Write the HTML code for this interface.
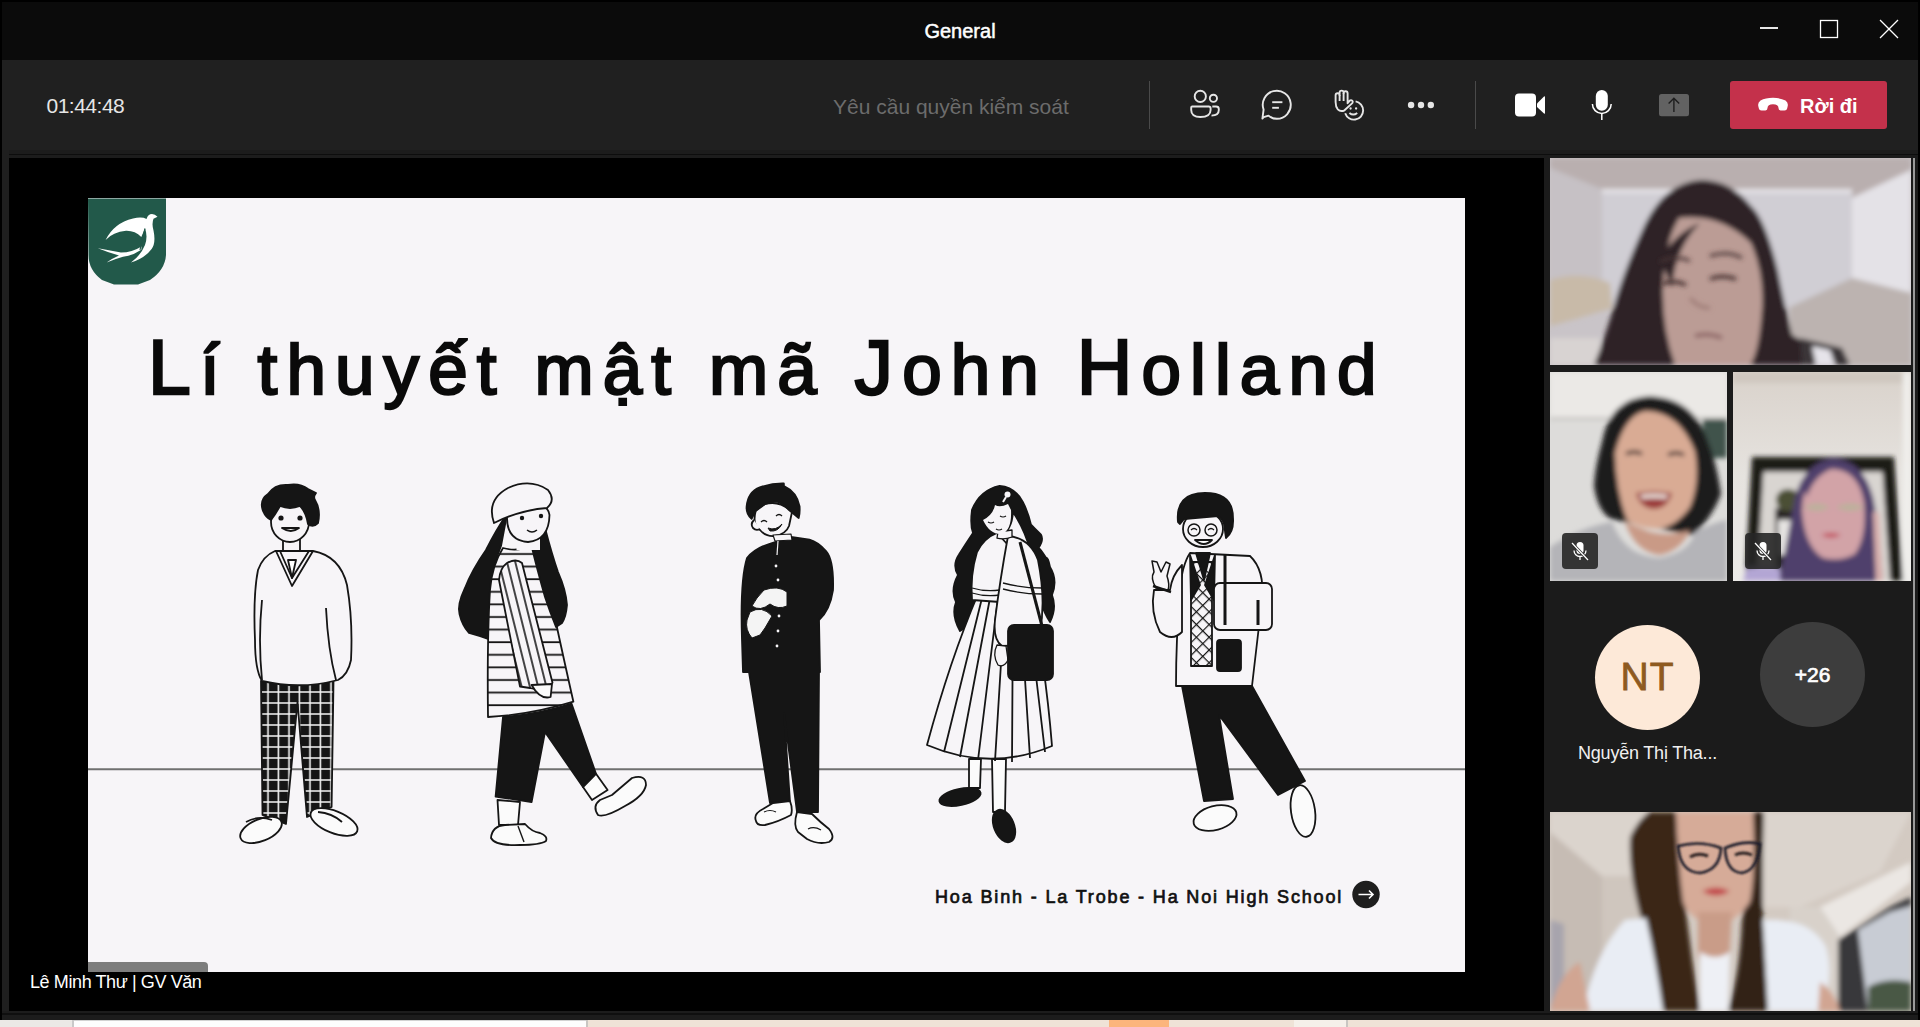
<!DOCTYPE html>
<html><head><meta charset="utf-8">
<style>
*{margin:0;padding:0;box-sizing:border-box}
html,body{width:1920px;height:1027px;overflow:hidden;background:#000;font-family:"Liberation Sans",sans-serif}
.abs{position:absolute}
#hdr{left:0;top:0;width:1920px;height:60px;background:#0b0b0b}
#title{left:0;top:19px;width:1920px;text-align:center;color:#fff;font-size:20px;line-height:24px;-webkit-text-stroke:0.5px #fff}
#tb{left:2px;top:60px;width:1916px;height:90px;background:#202020}
#tbsh{left:2px;top:150px;width:1916px;height:8px;background:#1c1c1c;border-top:4px solid #1c1c1c}
#tbline{left:2px;top:154px;width:1916px;height:1px;background:#0d0d0d}
#leftb{left:2px;top:150px;width:7px;height:870px;background:#1f1f1f}
#vid{left:9px;top:158px;width:1535px;height:853px;background:#000}
#panel{left:1544px;top:155px;width:375px;height:865px;background:#1b1b1b}
#rline{left:1913px;top:158px;width:2px;height:853px;background:#9a9a9a}
#bottom{left:2px;top:1011px;width:1917px;height:9px;background:#1c1c1c}
#bline{left:2px;top:1013px;width:1917px;height:2px;background:#0f0f0f}
#strip{left:0;top:1020px;width:1920px;height:7px;background:#efe3d7}
#slide{left:88px;top:198px;width:1377px;height:774px;background:#f7f5f8;overflow:hidden}
.tile{position:absolute;overflow:hidden}
.t{position:absolute;white-space:nowrap}
</style></head><body>
<div id="hdr" class="abs"></div>
<div id="title" class="abs">General</div>
<!-- window controls -->
<svg class="abs" style="left:1740px;top:10px" width="170" height="40">
  <line x1="20" y1="18" x2="38" y2="18" stroke="#fff" stroke-width="1.8"/>
  <rect x="80.5" y="10.5" width="17" height="17" fill="none" stroke="#fff" stroke-width="1.3"/>
  <line x1="140" y1="10" x2="158" y2="28" stroke="#fff" stroke-width="1.3"/>
  <line x1="158" y1="10" x2="140" y2="28" stroke="#fff" stroke-width="1.3"/>
</svg>
<div id="tb" class="abs"></div>
<div id="tbsh" class="abs"></div>
<div id="tbline" class="abs"></div>
<div id="leftb" class="abs"></div>
<div id="panel" class="abs"></div>
<div id="vid" class="abs"></div>
<div id="rline" class="abs"></div>
<div id="bottom" class="abs"></div>
<div id="bline" class="abs"></div>
<div id="strip" class="abs"></div>
<div class="abs" style="left:0;top:1020px;width:72px;height:7px;background:#ebe9e6"></div>
<div class="abs" style="left:72px;top:1020px;width:2px;height:7px;background:#c9c9c9"></div>
<div class="abs" style="left:74px;top:1020px;width:512px;height:7px;background:#fdfdfd;border-top:1px solid #d2d2d2"></div>
<div class="abs" style="left:586px;top:1020px;width:2px;height:7px;background:#c9c6c2"></div>
<div class="abs" style="left:1109px;top:1020px;width:60px;height:7px;background:#fcb57c"></div>
<div class="abs" style="left:1294px;top:1020px;width:52px;height:7px;background:#f5f0ea"></div>
<div class="abs" style="left:1346px;top:1020px;width:2px;height:7px;background:#c9c6c2"></div>
<div class="abs" style="left:0;top:0;width:1920px;height:2px;background:#000"></div><div class="abs" style="left:0;top:0;width:2px;height:1020px;background:#000"></div><div class="abs" style="left:1918px;top:0;width:2px;height:1020px;background:#000"></div>

<!-- toolbar -->
<div class="t" style="left:46.5px;top:93px;font-size:21px;line-height:26px;color:#e6e6e6;letter-spacing:-0.5px">01:44:48</div>
<div class="t" style="left:833px;top:94px;font-size:21px;line-height:26px;color:#6c6c6c">Yêu cầu quyền kiểm soát</div>
<div class="abs" style="left:1149px;top:81px;width:1px;height:48px;background:#4a4a4a"></div>
<div class="abs" style="left:1475px;top:81px;width:1px;height:48px;background:#4a4a4a"></div>
<svg class="abs" style="left:1180px;top:80px" width="260" height="50" fill="none" stroke="#e6e6e6" stroke-width="1.9">
  <!-- people -->
  <circle cx="20.3" cy="16.4" r="5.6"/>
  <circle cx="33.4" cy="18.3" r="3.6"/>
  <path d="M12.2 26.5 H28.7 Q30.6 26.5 30.6 28.4 V30 Q30.6 37 20.4 37 Q11.2 37 11.2 30 V27.5 Q11.2 26.5 12.2 26.5 Z"/>
  <path d="M32.3 26.5 H36 Q38.8 26.5 38.8 29 V30 Q38.8 35.5 31.5 35.6"/>
  <!-- chat -->
  <path d="M83.7 37.2 L88.5 35.6 Q92 38.8 96.9 38.8 A14 14 0 1 0 83.6 29.6 L82.4 38.6 Z" stroke-linejoin="round"/>
  <line x1="92.2" y1="22.2" x2="102.4" y2="22.2"/>
  <line x1="92.2" y1="27.8" x2="98.9" y2="27.8"/>
  <!-- hand + smiley -->
  <path d="M164.5 30.3Q160.5 32.2 157.8 29.3Q155.6 26.8 155.6 22V15.2Q155.6 13.2 157.6 13.2Q159.6 13.2 159.6 15.2V12.6Q159.6 10.6 161.6 10.6Q163.6 10.6 163.6 12.6V13.2Q163.6 11.2 165.6 11.2Q167.6 11.2 167.6 13.2V23.2L169.6 20.8Q171 19.5 172.3 20.7Q173.3 21.8 172.3 23.1Z" stroke-linejoin="round"/>
  <line x1="159.6" y1="15" x2="159.6" y2="21"/>
  <line x1="163.6" y1="13" x2="163.6" y2="21"/>
  <path d="M175.6 21.4A9.2 9.2 0 1 1 165.2 33.3"/>
  <circle cx="170.6" cy="28.5" r="1.15" fill="#e6e6e6" stroke="none"/>
  <circle cx="176.1" cy="28.5" r="1.15" fill="#e6e6e6" stroke="none"/>
  <path d="M169.4 33Q173.3 36.2 177.2 33"/>
  <!-- dots -->
  <circle cx="231.1" cy="25" r="3.2" fill="#e6e6e6" stroke="none"/>
  <circle cx="241" cy="25" r="3.2" fill="#e6e6e6" stroke="none"/>
  <circle cx="250.8" cy="25" r="3.2" fill="#e6e6e6" stroke="none"/>
</svg>
<svg class="abs" style="left:1500px;top:80px" width="200" height="50">
  <rect x="15" y="13.5" width="21" height="23" rx="4" fill="#fff"/>
  <path d="M37 23.5 L44 16.5 Q45 15.8 45 17 V33 Q45 34.2 44 33.5 L37 27 Z" fill="#fff"/>
  <rect x="95.8" y="9.9" width="12" height="20.8" rx="6" fill="#fff"/>
  <path d="M92.4 24 A9.4 9.4 0 0 0 111.2 24" fill="none" stroke="#fff" stroke-width="1.5"/>
  <line x1="101.8" y1="33.4" x2="101.8" y2="40" stroke="#fff" stroke-width="1.5"/>
  <rect x="159" y="14" width="30" height="22.3" rx="2.5" fill="#626262"/>
  <path d="M173.9 32 V18.5 M168.6 23.6 L173.9 18.3 L179.2 23.6" fill="none" stroke="#1e1e1e" stroke-width="1.4"/>
</svg>
<div class="abs" style="left:1730px;top:81px;width:157px;height:48px;background:#c4314b;border-radius:3px"></div>
<svg class="abs" style="left:1756px;top:96px" width="34" height="17">
  <path d="M2.5 11 Q1.2 7 4.5 4.6 Q9.5 1.8 17 1.8 Q24.5 1.8 29.5 4.6 Q32.8 7 31.5 11 Q31 14.5 28.5 14.6 L24.5 14.5 Q22.5 14.3 22.5 12 Q22.5 8.5 17 8.3 Q11.5 8.5 11.5 12 Q11.5 14.3 9.5 14.5 L5.5 14.6 Q3 14.5 2.5 11 Z" fill="#fff"/>
</svg>
<div class="t" style="left:1800px;top:94px;font-size:20px;line-height:24px;color:#fff;font-weight:bold">Rời đi</div>

<div id="slide" class="abs"></div>
<svg class="abs" style="left:88px;top:198px" width="1377" height="774" viewBox="88 198 1377 774">
<defs>
<pattern id="plaid" width="10.5" height="11" patternUnits="userSpaceOnUse" x="262" y="684"><rect width="10.5" height="11" fill="#151515"/><path d="M6 0V11M0 8H10.5" stroke="#f4f4f4" stroke-width="1.6"/></pattern>
<pattern id="hstripe" width="20" height="12.6" patternUnits="userSpaceOnUse" y="548"><rect width="20" height="12.6" fill="#f7f5f8"/><path d="M0 6H20" stroke="#151515" stroke-width="1.8"/></pattern>
<pattern id="vstripe" width="8" height="20" patternUnits="userSpaceOnUse" patternTransform="rotate(-14)"><rect width="8" height="20" fill="#f7f5f8"/><path d="M4 0V20" stroke="#151515" stroke-width="1.6"/></pattern>
<pattern id="argyle" width="9" height="9" patternUnits="userSpaceOnUse" patternTransform="rotate(45)"><rect width="9" height="9" fill="#f7f5f8"/><path d="M0 0V9M0 0H9" stroke="#151515" stroke-width="2.4"/></pattern>
</defs>
<!-- logo -->
<path d="M88 198.5H166V255Q165 270 150 280L138 284.5H114L102 280Q88.5 270 88.5 255Z" fill="#22594a"/>
<path d="M105.6 240Q114 223 133 218.5Q142 216.5 146.5 219Q148 214 152 214Q155 214 157.5 216.8L153.5 218.8Q151.5 224 153.6 231Q156 243 151.6 249Q145 258 131 262.6Q141 255 145 245Q148 236 145 228.5Q143 233 141.3 237Q135 230.5 126 230.8Q113 232 105.6 240Z" fill="#fff"/>
<path d="M97.9 248.3Q110 250.5 121 252.5Q132 252.5 141.5 246.5L141.3 249.8Q133 255.5 123 256.8Q115 259 106.6 262.6Q113 258 119 255.5Q108 252.5 97.9 248.3Z" fill="#fff"/>
<path d="M145 228.5Q142 240 140 250" stroke="#22594a" stroke-width="1.2" fill="none"/>
<!-- floor -->
<line x1="88" y1="769.2" x2="1465" y2="769.2" stroke="#707070" stroke-width="1.9"/>
<g stroke="#151515" stroke-width="1.8" stroke-linejoin="round">
<!-- boy 1 -->
<path d="M261 681L333.5 681L331.6 807L307 817L297.5 702L286 824L262.5 815Z" fill="url(#plaid)"/>
<ellipse cx="261" cy="830" rx="22" ry="11" transform="rotate(-22 261 830)" fill="#fbfbfb"/>
<ellipse cx="334" cy="822" rx="25" ry="11" transform="rotate(22 334 822)" fill="#fbfbfb"/>
<path d="M246 822Q258 815 272 820M318 812Q332 813 342 822" fill="none"/>
<rect x="283" y="536" width="17" height="16" fill="#f7f5f8"/>
<path d="M275 551L313 551Q340 556 347 585Q353 620 351 660Q348 675 338 680Q300 690 262 681Q255 670 255 640Q253 595 258 570Q263 556 275 551Z" fill="#f7f5f8"/>
<path d="M276 551L292 586L313 551M280 551L292 578L309 551" fill="none"/>
<path d="M288 560L292 578L296 560Z" fill="#fff"/>
<path d="M326 608Q328 650 336 680M262 600Q258 640 262 680" fill="none"/>
<ellipse cx="290" cy="522" rx="19" ry="20" fill="#f7f5f8"/>
<path d="M263 511Q259 500 268 494Q275 484 288 485Q300 483 308 489L316 493Q313 497 315 500Q321 510 318 523Q313 528 308 524Q306 512 300 506Q290 510 280 506Q275 515 271 520Q266 518 263 511Z" fill="#151515"/>
<circle cx="281" cy="518" r="2.6" fill="#151515" stroke="none"/><circle cx="300" cy="518" r="2.6" fill="#151515" stroke="none"/>
<path d="M282 528Q291 534 299 528Z" fill="#fff"/>
<!-- girl 2 -->
<path d="M507 514Q496 530 486 550Q472 570 465 588Q457 605 459.5 614Q462 625 469 633Q480 636 488 639Q490 610 492 584Q495 560 501 546Z" fill="#151515"/>
<path d="M503 717Q540 714 571.5 703.6L596 773.8L583 787L545 732L531.6 802L495.6 796.6Z" fill="#151515"/>
<path d="M497.5 800L520 802L518 825L499 825Z" fill="#fbfbfb"/>
<path d="M491 838Q492 826 505 825L525 824Q532 832 540 833Q548 836 546 841Q540 845 520 845Q495 846 491 838Z" fill="#fbfbfb"/>
<path d="M518 826L524 842" fill="none" stroke-width="1.4"/>
<path d="M583 787L596 773.8L607.6 790L592 800Z" fill="#fbfbfb"/>
<path d="M598 815Q592 806 600 800L612 795L632 778Q646 774 646 785Q644 796 625 806Q605 818 598 815Z" fill="#fbfbfb"/>
<path d="M503 548Q517 552 531.6 546L543 561Q555 620 573.4 701.7Q530 715 488 717Q487 640 490 590Q492 565 503 548Z" fill="url(#hstripe)"/>
<path d="M531.6 546Q540 540 545 528Q552 555 558 572Q566 590 567 605Q566 617 562 623L556 627Q550 612 545 597Q536 565 531.6 546Z" fill="#151515"/>
<path d="M507 563Q516 558 522 563L552.5 682.7Q545 692 530 688L520 686.5L499 580Q500 568 507 563Z" fill="url(#vstripe)"/>
<path d="M531.6 685Q540 700 550.6 697L552 684Z" fill="#fbfbfb"/>
<path d="M516.5 528L540 528L540 550L516.5 550Z" fill="#f7f5f8" stroke="none"/>
<path d="M507 518Q507 540 528 542Q549 540 549.5 515Q548 506 540 506L515 508Q507 510 507 518Z" fill="#f7f5f8"/>
<path d="M494 523Q486 500 508 488Q530 478 548 490Q556 500 547 508Q520 510 494 523Z" fill="#f7f5f8"/>
<circle cx="522" cy="518" r="2.2" fill="#151515" stroke="none"/><circle cx="541" cy="516" r="2.2" fill="#151515" stroke="none"/>
<path d="M527 530Q532 534 537 530" fill="none" stroke-width="1.4"/>
<!-- boy 3 -->
<path d="M749 672L819 672L818 812L797 812L784 713L790 802L770 803Z" fill="#151515"/>
<path d="M756 821Q753 814 763 809L773 803L790 801Q793 809 791 815Q778 822 765 825Q757 826 756 821Z" fill="#fbfbfb"/><path d="M764 812Q770 809 776 812" fill="none" stroke-width="1.2"/>
<path d="M797 812L812 814Q820 822 829 829Q836 838 829 842Q818 845 807 839L798 832Q793 826 797 812Z" fill="#fbfbfb"/><path d="M808 829Q814 826 821 830" fill="none" stroke-width="1.2"/>
<path d="M772 543Q755 548 747 558Q740 580 742 640L743 672L820 672L819 620Q830 610 833 590Q834 560 826 551Q818 542 809.5 539.6L791 537Z" fill="#151515"/>
<path d="M764 590Q778 585 787 592L787 606Q778 610 770 604Q760 612 752 606Q756 598 764 590Z" fill="#f4f4f4" stroke-width="1"/><path d="M750 612Q762 605 772 616L765 628L760 635L752 638Q745 630 747 620Z" fill="#f4f4f4" stroke-width="1"/>
<path d="M755.7 511Q752 525 760 530Q766 537 775 536Q786 534 789 526L792 512Q780 500 765 504Z" fill="#f7f5f8"/>
<path d="M754 520Q750 524 753 528Q756 531 760 529" fill="#f7f5f8"/>
<path d="M746.6 506.5Q748 492 759.8 487.4Q772 483 783.8 483.3L784 486Q797 492 799.6 506.5Q800 514 798.7 518L788.8 509.8Q782 502 776.4 501.5Q764 502 755.7 510.6L751.6 518.9Q746 514 746.6 506.5Z" fill="#151515"/>
<path d="M761 522Q764 519 767 522M776 516Q779 513 782 516" fill="none" stroke-width="1.3"/>
<path d="M768 528Q776 531 782 524Q778 532 770 531Z" fill="#151515" stroke-width="1"/>
<path d="M773 535L791 534L792 540L775 541Z" fill="#f7f5f8" stroke-width="1.2"/>
<path d="M778 541L777 555" fill="none" stroke="#f7f5f8" stroke-width="1.2"/>
<circle cx="776" cy="566" r="1.4" fill="#f7f5f8" stroke="none"/><circle cx="778" cy="580" r="1.4" fill="#f7f5f8" stroke="none"/><circle cx="779" cy="616" r="1.4" fill="#f7f5f8" stroke="none"/><circle cx="778" cy="631" r="1.4" fill="#f7f5f8" stroke="none"/><circle cx="777" cy="646" r="1.4" fill="#f7f5f8" stroke="none"/>
<!-- girl 4 -->
<path d="M999.6 485.8Q980 490 972 509.8Q970 525 973 533Q965 545 959 554.5Q952 565 958 575Q950 590 956 602Q951 615 960 631L974 622L978 560Q990 545 1000 537Q1012 530 1013 512Q1025 530 1030 550Q1036 580 1040 600Q1045 615 1050 622Q1057 608 1052 595Q1058 580 1050 567Q1048 557 1046 557.8Q1040 548 1038.5 547.8Q1044 540 1041 534.6Q1034 528 1031 524.7Q1028 512 1022.8 502Q1015 487 999.6 485.8Z" fill="#151515"/>
<path d="M969 759L981 759L980 788L969 788Z" fill="#fbfbfb"/>
<ellipse cx="960" cy="797" rx="21" ry="8" transform="rotate(-12 960 797)" fill="#151515"/>
<path d="M992 759L1006 759L1005 812L993 812Z" fill="#fbfbfb"/>
<ellipse cx="1004" cy="826" rx="10" ry="17" transform="rotate(-22 1004 826)" fill="#151515"/>
<path d="M978 594L1030 594Q1045 660 1052 746Q990 772 927 745Q950 660 978 594Z" fill="#f7f5f8"/>
<path d="M982 598L944 752M990 598L960 757M998 598L978 760M1005 598L995 761M1013 598L1012 762M1020 600L1030 758M1027 600L1045 752" fill="none"/>
<path d="M997 533Q984 538 977 552Q970 575 972 600L1000 602L1008 545Z" fill="#f7f5f8"/><path d="M972 588Q985 592 1000 590M972 593Q985 597 1000 595" fill="none" stroke-width="1.3"/>
<path d="M1008 536Q1030 538 1038 560Q1046 600 1040 632Q1030 646 1002 646Q993 640 995 620Q1000 580 1008 536Z" fill="#f7f5f8"/><path d="M1003 583Q1022 588 1042 588M1003 589Q1022 594 1042 594" fill="none" stroke-width="1.3"/><path d="M997 645Q992 655 998 665Q1004 668 1008 660L1006 646Z" fill="#f7f5f8" stroke-width="1.3"/><path d="M998 532L1012 530L1012 537Q1004 540 997 538Z" fill="#f7f5f8" stroke-width="1.3"/>
<rect x="1008" y="625" width="45" height="55" rx="6" fill="#151515"/>
<path d="M1020 542L1042 626" fill="none" stroke-width="3"/>
<path d="M983 520Q990 535 1002 534Q1012 530 1011 510L1008 504Q1000 508 995 505Q993 515 983 520Z" fill="#f7f5f8" stroke="none"/>
<circle cx="1007.5" cy="494.5" r="3" fill="#f7f5f8" stroke="none"/>
<path d="M1003 502L1006 497" stroke="#f7f5f8" stroke-width="2"/>
<path d="M988 522Q991 524 994 522M1000 516Q1003 518 1006 516" fill="none" stroke-width="1.2"/>
<path d="M996 529Q999 531 1002 529" fill="none" stroke-width="1.2"/>
<!-- boy 5 -->
<path d="M1182 686L1252 686L1305 781L1278 795L1219 715L1233 799L1204 801Z" fill="#151515"/>
<ellipse cx="1215" cy="818" rx="22" ry="12" transform="rotate(-15 1215 818)" fill="#fbfbfb"/>
<ellipse cx="1303" cy="811" rx="12" ry="26" transform="rotate(-8 1303 811)" fill="#fbfbfb"/>
<path d="M1190 553L1250 556Q1265 570 1262 600L1252 686L1176 686Q1176 640 1180 590Q1182 565 1190 553Z" fill="#f7f5f8"/>
<path d="M1191 562L1212 562L1212 666L1191 666Z" fill="url(#argyle)"/>
<path d="M1196 553L1210 553L1204 580Z" fill="#151515"/><path d="M1190 555L1200 585L1191 600Z" fill="#151515"/><path d="M1215 555L1205 585L1214 600Z" fill="#151515"/>
<path d="M1182 565Q1172 575 1170 590L1154 590Q1150 612 1160 632Q1172 642 1182 632Z" fill="#f7f5f8"/>
<path d="M1156 588Q1150 578 1154 572L1152 561L1157 562L1161 572L1166 562L1170 564L1167 576Q1170 585 1168 590Z" fill="#f7f5f8" stroke-width="1.5"/><path d="M1153 586L1171 592" fill="none" stroke-width="2.5"/>
<rect x="1214" y="583" width="58" height="47" rx="6" fill="#f7f5f8"/>
<path d="M1225 555L1225 625M1258 600L1258 625" fill="none" stroke-width="3"/>
<rect x="1217" y="640" width="24" height="31" rx="3" fill="#151515"/>
<ellipse cx="1203" cy="529" rx="20" ry="18" fill="#f7f5f8"/>
<path d="M1178 522Q1175 493 1205 493Q1233 493 1233 518Q1234 532 1226 538L1224 524Q1222 518 1218 516L1184 519L1180 524Z" fill="#151515"/>
<circle cx="1194" cy="530" r="6" fill="none" stroke-width="1.5"/><circle cx="1211" cy="530" r="6" fill="none" stroke-width="1.5"/><path d="M1191 530Q1194 527 1197 530M1208 530Q1211 527 1214 530" fill="none" stroke-width="1.2"/>
<path d="M1195 540Q1204 548 1212 540Z" fill="#fff"/>
</g>
<!-- footer -->
<circle cx="1366" cy="894.5" r="13.7" fill="#1e1e1e"/>
<path d="M1358.5 894.5H1373M1369 890.5L1373 894.5L1369 898.5" stroke="#fff" stroke-width="1.6" fill="none"/>
</svg>
<div class="t" id="ttl" style="left:148px;top:322px;font-size:71px;line-height:90px;font-weight:normal;color:#0a0a0a;letter-spacing:9.1px;-webkit-text-stroke:2.4px #0a0a0a"><span style="font-size:77px">L</span>í thuyết mật mã <span style="font-size:77px">J</span>ohn <span style="font-size:77px">H</span>olland</div>
<div class="t" id="ftr" style="left:935px;top:886px;font-size:18px;line-height:22px;font-weight:normal;color:#111;letter-spacing:1.85px;-webkit-text-stroke:0.7px #111">Hoa Binh - La Trobe - Ha Noi High School</div>
<div class="abs" style="left:88px;top:962px;width:120px;height:10px;background:#7d7d7d;border-top-right-radius:4px"></div>
<div class="t" style="left:30px;top:971px;font-size:18px;line-height:22px;color:#fff;letter-spacing:-0.4px">Lê Minh Thư | GV Văn</div>


<!-- participant tiles -->
<svg class="abs" style="left:1550px;top:158px" width="361" height="207" viewBox="0 0 361 207">
<defs><filter id="bl3" x="-20%" y="-20%" width="140%" height="140%"><feGaussianBlur stdDeviation="2.5"/></filter>
<filter id="bl6" x="-20%" y="-20%" width="140%" height="140%"><feGaussianBlur stdDeviation="6"/></filter><filter id="bl1" x="-20%" y="-20%" width="140%" height="140%"><feGaussianBlur stdDeviation="0.8"/></filter></defs>
<rect width="361" height="207" fill="#c9c4c8"/>
<g filter="url(#bl3)">
<path d="M0 0H361V12L302 40H52L0 10Z" fill="#b9afaf"/>
<rect x="52" y="31" width="250" height="118" fill="#d0ced4"/>
<rect x="52" y="31" width="250" height="4" fill="#e6e4e8"/>
<path d="M0 10L52 31V149L0 160Z" fill="#c6c1c5"/>
<path d="M302 40L361 12V135L302 120Z" fill="#e4e2e7"/>
<path d="M302 120L361 135V207H240V149Z" fill="#bcb3b0"/>
<path d="M0 180H50V207H0Z" fill="#d8d3d2"/>
<path d="M0 122Q30 112 60 125L62 150Q30 160 0 168Z" fill="#c8baa8"/>
<path d="M151 22Q115 25 95 66Q75 110 66 141Q55 180 44 207H292Q265 190 242 177Q233 140 228 113Q215 60 201 48Q180 22 151 22Z" fill="#2f2427"/>
<path d="M129 60Q170 55 201 85Q214 115 212 150Q209 195 200 207H125Q112 170 113 130Q114 85 129 60Z" fill="#bb9c95"/>
<path d="M110 101Q125 75 150 65Q125 90 122 130Z" fill="#2f2427"/>
<path d="M145 178Q158 174 172 180" stroke="#8c6464" stroke-width="4" fill="none"/>
<path d="M250 180L292 190L300 207H252Z" fill="#3a3538"/>
<path d="M262 188L280 192L285 207L266 207Z" fill="#e6e4ea"/>
</g>
<g filter="url(#bl3)"><path d="M110 104Q125 96 140 103M160 98Q178 92 192 100" stroke="#4a3434" stroke-width="3" fill="none"/>
<path d="M112 126Q124 121 136 127M160 121Q172 116 186 121" stroke="#3a2828" stroke-width="3.5" fill="none"/>
<path d="M140 140Q148 150 160 150" stroke="#9c7a74" stroke-width="3" fill="none"/></g>
</svg>

<svg class="abs" style="left:1550px;top:372px" width="177" height="209" viewBox="0 0 177 209">
<rect width="177" height="209" fill="#dddcda"/>
<g filter="url(#bl3)">
<rect width="177" height="47" fill="#ebe9e6"/>
<rect y="45" width="177" height="3" fill="#c8c6c3"/>
<rect x="153" y="47" width="24" height="39" fill="#40534b"/>
<path d="M100 24Q60 26 52 70Q45 95 44 114Q48 140 61 147L142 163Q160 150 171 122Q165 80 150 52Q135 26 100 24Z" fill="#1b1a1b"/>
<path d="M96 39Q130 40 145 80Q150 110 140 135Q125 156 106 157Q85 155 77 148Q66 120 65 81Q75 42 96 39Z" fill="#d9ab94"/>
<path d="M0 175Q30 155 62 150Q75 185 110 186Q140 180 145 160Q165 150 177 148V209H0Z" fill="#b4b4b8"/>
<path d="M75 150Q85 180 110 183Q132 178 140 158Q120 165 100 160Z" fill="#c99a86"/>
<path d="M86 121Q104 118 122 121Q118 136 104 137Q90 136 86 121Z" fill="#9b3b3a"/>
<path d="M90 123Q104 121 118 123L116 127Q104 125 92 127Z" fill="#f0e6e0"/>
<path d="M76 82Q84 78 92 82M118 83Q126 79 134 83" stroke="#3a2a2a" stroke-width="3.5" fill="none"/>
</g>
</svg>

<svg class="abs" style="left:1733px;top:372px" width="178" height="209" viewBox="0 0 178 209">
<defs><linearGradient id="t3bg" x1="0" y1="0" x2="0" y2="1"><stop offset="0" stop-color="#d9d2cb"/><stop offset="0.5" stop-color="#e6e3df"/><stop offset="1" stop-color="#ecebe8"/></linearGradient></defs>
<rect width="178" height="209" fill="url(#t3bg)"/>
<g filter="url(#bl3)">
<rect width="178" height="11" fill="#cfc7bf"/>
<rect x="170" width="8" height="209" fill="#f0efec"/>
<path d="M19 85H161L170 209H12Z" fill="#1f1a19"/>
<path d="M30.5 99.7H149.5L157 209H24Z" fill="#d9d5d1"/>
<rect x="42" y="136" width="21" height="73" fill="#2c2826"/>
<rect x="45" y="148" width="18" height="35" fill="#e6e4e2"/>
<ellipse cx="55" cy="128" rx="12" ry="11" fill="#4c5034"/>
<path d="M100 87Q72 90 62 125Q55 165 46 209H150Q148 165 140 125Q130 88 100 87Z" fill="#4f3f6c"/>
<path d="M98 97Q125 97 131 130Q134 165 122 182Q108 190 90 186Q72 175 69 140Q69 102 98 97Z" fill="#d2a3a7"/>
<path d="M98 97Q80 105 74 125L70 110Q80 92 98 97Z" fill="#4f3f6c"/>
<path d="M71 135Q84 128 97 135Q84 143 71 135ZM103 135Q118 128 131 135Q118 143 103 135Z" fill="#aebb92" opacity="0.6"/>
<path d="M88 163Q98 159 108 163Q98 168 88 163Z" fill="#c24a5a"/>
<path d="M10 209L14 196Q30 192 47 196V209Z" fill="#b3a6d4"/>
<path d="M140 140L146 140L150 209H143Z" fill="#d9b0ad"/>
</g>
</svg>

<svg class="abs" style="left:1550px;top:812px" width="361" height="199" viewBox="0 0 361 199">
<rect width="361" height="199" fill="#d3cac2"/>
<g filter="url(#bl3)">
<path d="M0 0H361V0L330 60L250 95L60 95L0 30Z" fill="#dbd4cd"/>
<path d="M0 20L52 64L52 199H0Z" fill="#c6bcb4"/>
<path d="M52 64H100V199H52Z" fill="#cfc6be"/>
<path d="M270 95L361 50V70L290 125Z" fill="#ebe7e3"/>
<path d="M270 95L290 125L290 199H240V95Z" fill="#d8d1ca"/>
<path d="M0 108L14 112L14 190L0 199Z" fill="#a7a4ad"/>
<path d="M288 128L340 95L361 85V199H288Z" fill="#38373a"/>
<path d="M308 118L340 100L361 94V199H318Z" fill="#c8ccd4"/>
<path d="M318 175Q335 165 361 170V199H318Z" fill="#4a5845"/>
<path d="M99 0H130Q133 60 136 100Q142 150 150 199H113Q98 150 92 110Q78 60 80 25Q88 8 99 0Z" fill="#3a2519"/>
<path d="M200 0H214Q212 60 213 110Q218 160 218 199H178Q190 160 192 110Q200 60 200 0Z" fill="#302118"/>
<path d="M126 0H203Q206 60 200 90Q185 112 166 112Q140 110 133 90Q128 50 126 0Z" fill="#d6ab98"/>
<path d="M148 100L182 100L179 150L148 147Z" fill="#c99c88"/>
<path d="M152 79Q166 72 180 79Q166 88 152 79Z" fill="#c24448"/>
<path d="M33 199Q45 140 75 108L96 106Q106 150 113 199Z" fill="#e9edf4"/>
<path d="M150 140Q165 150 180 140L178 199H150Z" fill="#eef0f5"/>
<path d="M213 108Q260 105 276 135Q285 165 270 199H218Z" fill="#e9edf4"/>
<path d="M0 199Q10 160 30 150L40 199Z" fill="#d1a592"/>
<path d="M270 170Q285 180 290 199H268Z" fill="#d1a592"/>
</g>
<g filter="url(#bl1)"><path d="M140 45Q148 40 158 44M185 43Q193 39 202 43" stroke="#2a2020" stroke-width="3" fill="none"/><path d="M128 34Q150 28 171 36Q170 58 150 61Q130 60 128 34ZM175 36Q195 28 210 32Q208 58 192 61Q176 60 175 36Z" fill="none" stroke="#1e1e2a" stroke-width="2.6"/></g>
</svg>

<!-- mute badges -->
<div class="abs" style="left:1562px;top:533px;width:36px;height:36px;border-radius:4px;background:rgba(38,38,38,0.9)"></div>
<div class="abs" style="left:1745px;top:533px;width:36px;height:36px;border-radius:4px;background:rgba(38,38,38,0.9)"></div>
<svg class="abs" style="left:1562px;top:533px" width="36" height="36"><rect x="14.5" y="9" width="7" height="12" rx="3.5" fill="#fff"/><path d="M12 17.5A6 6 0 0 0 24 17.5M18 23.5V27" stroke="#fff" stroke-width="1.3" fill="none"/><path d="M10 10L26 27" stroke="#262626" stroke-width="2.6"/><path d="M10 10L26 27" stroke="#fff" stroke-width="1.3"/></svg>
<svg class="abs" style="left:1745px;top:533px" width="36" height="36"><rect x="14.5" y="9" width="7" height="12" rx="3.5" fill="#fff"/><path d="M12 17.5A6 6 0 0 0 24 17.5M18 23.5V27" stroke="#fff" stroke-width="1.3" fill="none"/><path d="M10 10L26 27" stroke="#262626" stroke-width="2.6"/><path d="M10 10L26 27" stroke="#fff" stroke-width="1.3"/></svg>

<!-- avatars -->
<div class="abs" style="left:1595px;top:625px;width:105px;height:105px;border-radius:50%;background:#fde9d8"></div>
<div class="t" style="left:1595px;top:655px;width:105px;text-align:center;font-size:39px;line-height:44px;color:#8e5a1f;letter-spacing:1px;-webkit-text-stroke:0.8px #8e5a1f">NT</div>
<div class="abs" style="left:1760px;top:622px;width:105px;height:105px;border-radius:50%;background:#3d3d3d"></div>
<div class="t" style="left:1760px;top:663px;width:105px;text-align:center;font-size:21px;line-height:24px;color:#fff;font-weight:normal;-webkit-text-stroke:0.7px #fff">+26</div>
<div class="t" style="left:1578px;top:742px;font-size:18px;line-height:22px;color:#f0f0f0;letter-spacing:-0.2px">Nguyễn Thị Tha...</div>
</body></html>
